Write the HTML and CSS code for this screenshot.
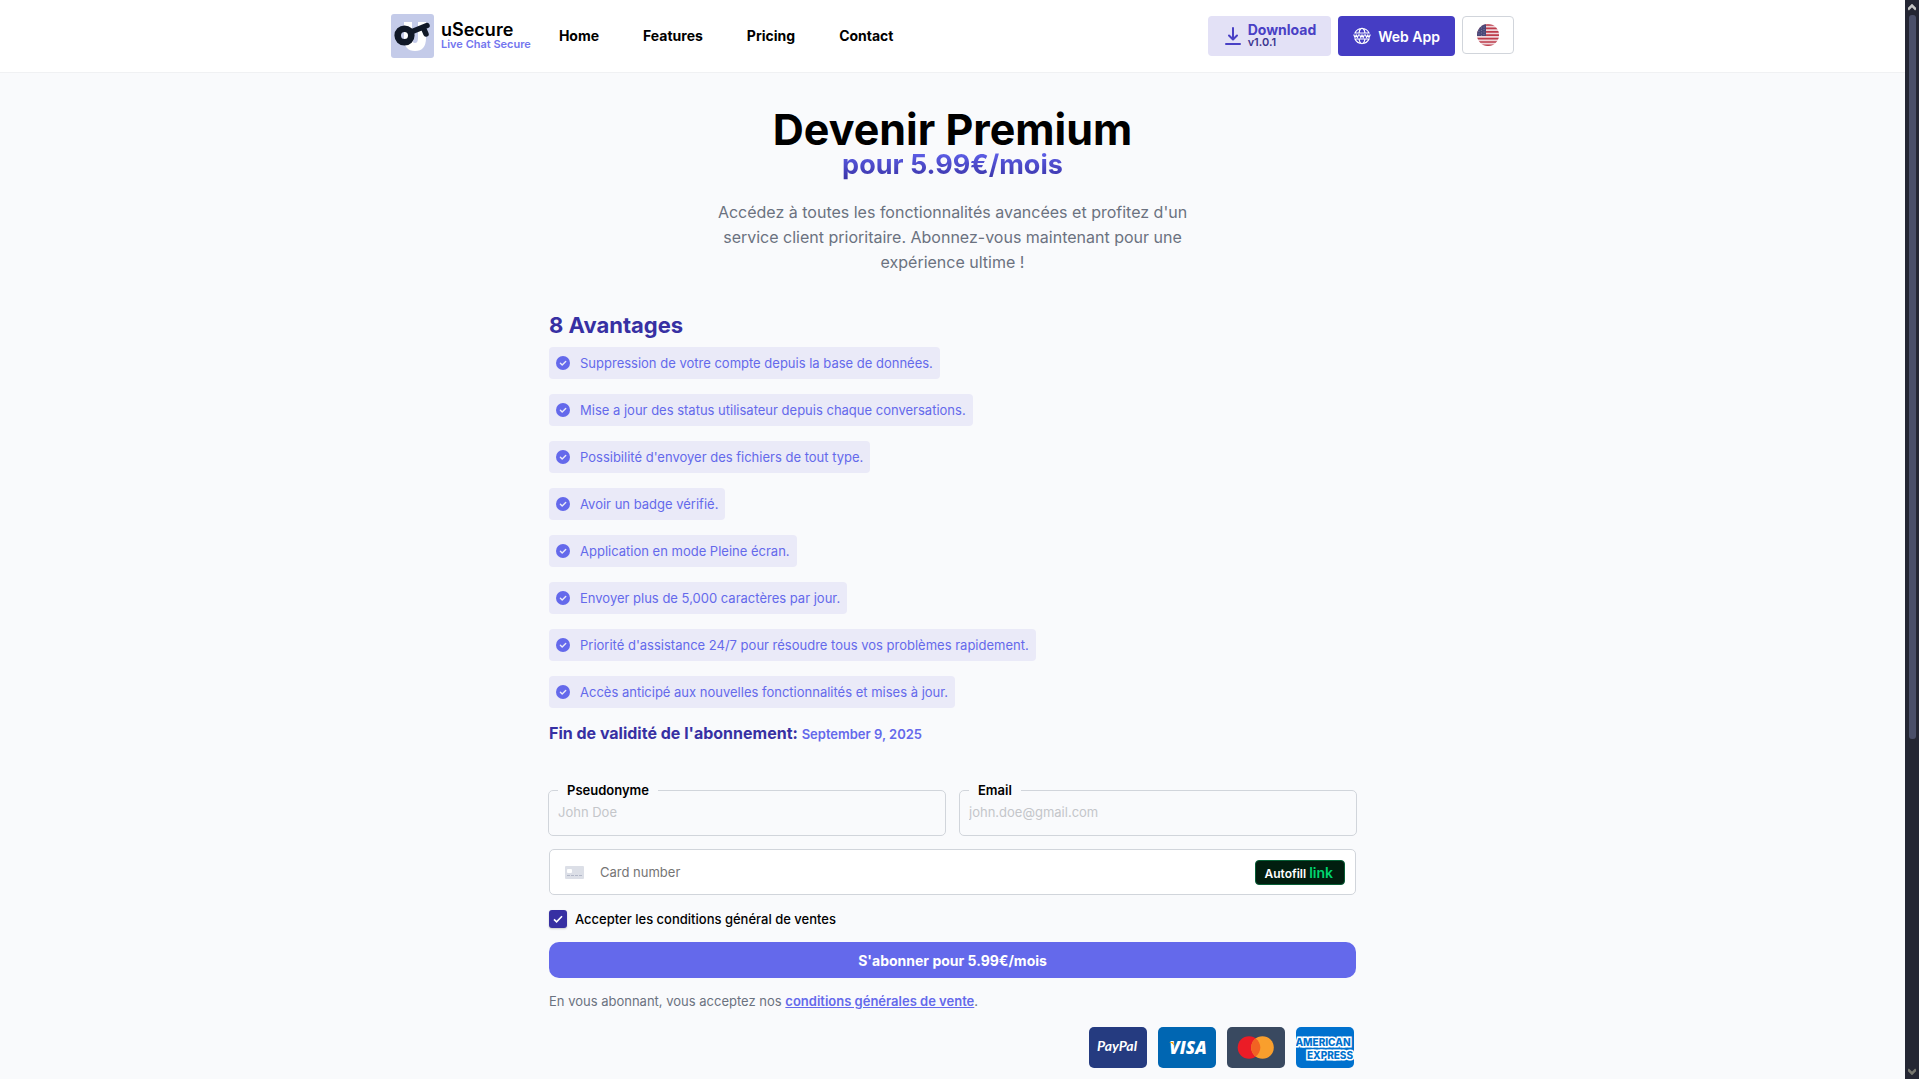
FILE: index.html
```html
<!DOCTYPE html>
<html lang="fr">
	<head>
		<meta charset="UTF-8">
		<meta name="viewport" content="width=device-width, initial-scale=1">
		<title>uSecure - Devenir Premium</title>
		<link rel="stylesheet" href="styles.css">
	</head>
	<body>
		<!-- check icon used by every advantage -->
		<svg class="sprite" aria-hidden="true">
			<symbol id="check" viewBox="0 0 14 14">
				<circle cx="7" cy="7" r="7" fill="#6469eb"/>
				<path d="M4.4 7.2l1.8 1.8 3.5-3.6" fill="none" stroke="#eaeaf8" stroke-width="1.4" stroke-linecap="round" stroke-linejoin="round"/>
			</symbol>
		</svg>

		<div class="page">
			<header class="header">
				<div class="header-in">
					<a class="brand" href="#">
						<svg class="logo" viewBox="0 0 43 44" aria-hidden="true">
							<rect width="43" height="44" rx="3" fill="#c4cbe9"/>
							<path d="M17 8v16q0 9 7 9t7-9V8" fill="none" stroke="#fff" stroke-width="8"/>
							<circle cx="13.5" cy="21.5" r="6.8" fill="none" stroke="#101827" stroke-width="6.6"/>
							<path d="M20 18L36 11.5M32 13l3 7" fill="none" stroke="#101827" stroke-width="5.5" stroke-linecap="round"/>
						</svg>
						<span class="brand-text">
							<span class="brand-name">uSecure</span>
							<span class="brand-sub">Live Chat Secure</span>
						</span>
					</a>
					<nav class="nav">
						<a href="#">Home</a>
						<a href="#">Features</a>
						<a href="#">Pricing</a>
						<a href="#">Contact</a>
					</nav>
					<div class="actions">
						<button class="btn-download" type="button">
							<svg width="16" height="18" viewBox="0 0 16 18" fill="none" stroke="#4940c5" stroke-width="2" stroke-linecap="round" stroke-linejoin="round" aria-hidden="true">
								<path d="M8 1v11M4 8.5l4 4 4-4M1 17h14"/>
							</svg>
							<span class="download-text">
								<span>Download</span>
								<small>v1.0.1</small>
							</span>
						</button>
						<button class="btn-web" type="button">
							<svg width="18" height="18" viewBox="0 0 18 18" fill="none" stroke="#fff" stroke-width="1.2" aria-hidden="true">
								<path d="M2 6a7.7 7.7 0 0 1 14 0zM2 12a7.7 7.7 0 0 0 14 0zM6 6q.8-4.6 3-4.6T12 6M6 12q.8 4.6 3 4.6t3-4.6"/>
								<path d="M.7 7.4l1.3 3 1.2-2.4 1.2 2.4 1.3-3M6.5 7.4l1.3 3L9 8l1.2 2.4 1.3-3M12.3 7.4l1.3 3 1.2-2.4 1.2 2.4 1.3-3"/>
							</svg>
							Web App
						</button>
						<button class="btn-lang" type="button" aria-label="Language">
							<svg width="22" height="22" viewBox="0 0 22 22" aria-hidden="true">
								<clipPath id="round"><circle cx="11" cy="11" r="11"/></clipPath>
								<g clip-path="url(#round)">
									<rect width="22" height="22" fill="#eed5da"/>
									<path d="M0 1h22M0 4.4h22M0 7.8h22M0 11.2h22M0 14.6h22M0 18h22M0 21.4h22" stroke="#bd3d4b" stroke-width="1.7"/>
									<rect width="9" height="12" fill="#494878"/>
									<path d="M2 2v10M4.5 1v11M7 0v12" stroke="#8582a8" stroke-width=".8" stroke-dasharray="1 1.5"/>
								</g>
							</svg>
						</button>
					</div>
				</div>
			</header>

			<main class="main">
				<section class="hero">
					<h1>Devenir Premium</h1>
					<p class="price">pour 5.99€/mois</p>
					<p class="intro">Accédez à toutes les fonctionnalités avancées et profitez d'un service client prioritaire. Abonnez-vous maintenant pour une expérience ultime !</p>
				</section>

				<h2>8 Avantages</h2>
				<ul class="list">
					<li><svg><use href="#check"/></svg>Suppression de votre compte depuis la base de données.</li>
					<li><svg><use href="#check"/></svg>Mise a jour des status utilisateur depuis chaque conversations.</li>
					<li><svg><use href="#check"/></svg>Possibilité d'envoyer des fichiers de tout type.</li>
					<li><svg><use href="#check"/></svg>Avoir un badge vérifié.</li>
					<li><svg><use href="#check"/></svg>Application en mode Pleine écran.</li>
					<li><svg><use href="#check"/></svg>Envoyer plus de 5,000 caractères par jour.</li>
					<li><svg><use href="#check"/></svg>Priorité d'assistance 24/7 pour résoudre tous vos problèmes rapidement.</li>
					<li><svg><use href="#check"/></svg>Accès anticipé aux nouvelles fonctionnalités et mises à jour.</li>
				</ul>
				<p class="validity">Fin de validité de l'abonnement: <span>September 9, 2025</span></p>

				<form class="form">
					<div class="fields">
						<fieldset>
							<legend><label for="pseudo">Pseudonyme</label></legend>
							<input id="pseudo" name="pseudo" type="text" placeholder="John Doe">
						</fieldset>
						<fieldset>
							<legend><label for="email">Email</label></legend>
							<input id="email" name="email" type="email" placeholder="john.doe@gmail.com">
						</fieldset>
					</div>
					<div class="card-field">
						<svg width="19" height="13" viewBox="0 0 19 13" aria-hidden="true">
							<rect width="19" height="13" rx="1" fill="#dcdfe7"/>
							<rect x="2" y="3" width="5" height="4" rx="1" fill="#fff"/>
							<path d="M2 9.5h15" stroke="#b3b8c8" stroke-dasharray="3 1"/>
						</svg>
						<input name="card" type="text" placeholder="Card number" aria-label="Card number">
						<button class="autofill" type="button">Autofill <b>link</b></button>
					</div>
					<div class="terms">
						<input id="terms" name="terms" type="checkbox" checked>
						<label for="terms">Accepter les conditions général de ventes</label>
					</div>
					<button class="subscribe" type="submit">S'abonner pour 5.99€/mois</button>
				</form>
				<p class="notice">En vous abonnant, vous acceptez nos <a href="#">conditions générales de vente</a>.</p>

				<div class="payments">
					<svg viewBox="0 0 58 41" role="img" aria-label="PayPal">
						<rect width="58" height="41" rx="5" fill="#253b80"/>
						<text class="paypal" x="28" y="24" text-anchor="middle">PayPal</text>
					</svg>
					<svg viewBox="0 0 58 41" role="img" aria-label="Visa">
						<rect width="58" height="41" rx="5" fill="#0066b2"/>
						<text class="visa" x="30" y="27" text-anchor="middle">VISA</text>
						<path d="M11 15h4l2 5q-2-4-6-5z" fill="#f7a600"/>
					</svg>
					<svg viewBox="0 0 58 41" role="img" aria-label="Mastercard">
						<rect width="58" height="41" rx="5" fill="#394960"/>
						<circle cx="22" cy="20.5" r="11.3" fill="#eb1c26"/>
						<circle cx="35.5" cy="20.5" r="11.3" fill="#f99f2d"/>
						<path d="M28.7 11.4a11.3 11.3 0 0 1 0 18.2a11.3 11.3 0 0 1 0-18.2z" fill="#f16223"/>
					</svg>
					<svg viewBox="0 0 58 41" role="img" aria-label="American Express">
						<rect width="58" height="41" rx="5" fill="#0071ce"/>
						<text class="amex" x="27" y="19" text-anchor="middle">AMERICAN</text>
						<text class="amex" x="34" y="32" text-anchor="middle">EXPRESS</text>
					</svg>
				</div>
			</main>
		</div>

		<div class="scrollbar" aria-hidden="true">
			<svg width="8" height="7" viewBox="0 0 8 7"><path d="M0 5.5L4 1.5l4 4" fill="none" stroke="#c6c6c6" stroke-width="2.5"/></svg>
			<div class="track"><div class="thumb"></div></div>
			<svg width="8" height="7" viewBox="0 0 8 7"><path d="M0 1.5l4 4 4-4" fill="none" stroke="#77776f" stroke-width="2.5"/></svg>
		</div>
	</body>
</html>
```
FILE: styles.css
```css
* {
	box-sizing: border-box;
}

body {
	margin: 0;
	display: flex;
	height: 100vh;
	overflow: hidden;
	background: #f9fafc;
	color: #000;
	font-family: Inter, "Liberation Sans", sans-serif;
	font-size: 13px;
	line-height: 20px;
}

h1, h2, p, ul {
	margin: 0;
	padding: 0;
}

button, input {
	font-family: inherit;
}

button {
	border: 0;
	padding: 0;
	cursor: pointer;
}

a {
	color: inherit;
	text-decoration: none;
}

.sprite {
	display: none;
}

.page {
	flex: 1;
	overflow: hidden;
}

/* header */
.header {
	background: #fff;
	border-bottom: 1px solid #f0f1f3;
	padding: 0 16px;
}

.header-in {
	display: flex;
	align-items: center;
	max-width: 1123px;
	height: 72px;
	margin: 0 auto;
}

.brand {
	display: flex;
	align-items: center;
	gap: 7px;
}

.logo {
	width: 43px;
	height: 44px;
}

.brand-text {
	display: flex;
	flex-direction: column;
}

.brand-name {
	font-size: 18px;
	font-weight: 600;
	line-height: 16px;
}

.brand-sub {
	font-size: 11px;
	font-weight: 600;
	line-height: 12px;
	color: #7375ee;
}

.nav {
	display: flex;
	gap: 44px;
	margin-left: 28px;
	font-size: 14px;
	font-weight: 700;
}

.actions {
	display: flex;
	align-items: flex-start;
	gap: 7px;
	margin-left: auto;
}

.btn-download, .btn-web {
	display: flex;
	align-items: center;
	height: 40px;
	border-radius: 4px;
}

.btn-download {
	gap: 7px;
	padding: 0 15px 0 17px;
	background: #e3e1f6;
	color: #4940c5;
	font-size: 14px;
	font-weight: 700;
}

.download-text {
	display: flex;
	flex-direction: column;
	align-items: flex-start;
	line-height: 12px;
}

.download-text small {
	font-size: 11px;
	font-weight: 600;
	line-height: 12px;
	color: #3b3590;
}

.btn-web {
	gap: 7px;
	padding: 0 15px;
	background: #453dc4;
	color: #fff;
	font-size: 14px;
	font-weight: 600;
}

.btn-lang {
	display: flex;
	align-items: center;
	justify-content: center;
	width: 52px;
	height: 38px;
	border: 1px solid #d1d5db;
	border-radius: 4px;
	background: #fff;
}

/* content */
.main {
	max-width: 807px;
	margin: 0 auto;
	padding-top: 36px;
}

.hero {
	text-align: center;
}

h1 {
	font-size: 43px;
	font-weight: 700;
	line-height: 40px;
}

.price {
	width: fit-content;
	margin: 0 auto;
	font-size: 27px;
	font-weight: 700;
	line-height: 32px;
	background: linear-gradient(#6366f1, #3730a3);
	background-clip: text;
	color: transparent;
}

.intro {
	max-width: 500px;
	margin: 19px auto 0;
	font-size: 16px;
	line-height: 25px;
	color: #6b7280;
}

h2 {
	margin-top: 36px;
	font-size: 22px;
	font-weight: 700;
	line-height: 28px;
	color: #3730a3;
}

.list {
	display: flex;
	flex-direction: column;
	align-items: flex-start;
	gap: 15px;
	margin-top: 8px;
	list-style: none;
}

.list li {
	display: flex;
	align-items: center;
	gap: 10px;
	height: 32px;
	padding: 0 7px;
	border-radius: 4px;
	background: #eaeaf8;
	color: #6469eb;
}

.list svg {
	width: 14px;
	height: 14px;
}

.validity {
	margin-top: 15px;
	font-size: 16px;
	font-weight: 700;
	color: #3730a3;
}

.validity span {
	font-size: 13px;
	font-weight: 600;
	color: #6469eb;
}

/* form */
.form {
	display: flex;
	flex-direction: column;
	margin-top: 36px;
}

.fields {
	display: grid;
	grid-template-columns: 1fr 1fr;
	gap: 13px;
	margin: 0 -1px;
}

fieldset {
	min-width: 0;
	height: 56px;
	margin: 0;
	padding: 0 9px;
	border: 1px solid #d1d5db;
	border-radius: 5px;
}

legend {
	padding: 0 9px;
	font-size: 13px;
	font-weight: 600;
	line-height: 20px;
}

fieldset input, .card-field input {
	border: 0;
	padding: 0;
	background: none;
	outline: none;
}

fieldset input {
	display: block;
	width: 100%;
	height: 24px;
	font-size: 13px;
}

fieldset input::placeholder {
	color: #c4c6ca;
}

.card-field {
	display: flex;
	align-items: center;
	height: 46px;
	margin-top: 13px;
	padding: 0 10px 0 15px;
	border: 1px solid #d1d5db;
	border-radius: 5px;
	background: #fff;
}

.card-field input {
	flex: 1;
	margin-left: 16px;
	font-size: 13px;
}

.autofill {
	height: 25px;
	padding: 0 11px 0 8px;
	border: 1px solid #065f36;
	border-radius: 4px;
	background: #011e0f;
	color: #fff;
	font-size: 12px;
	font-weight: 600;
}

.autofill b {
	font-size: 14px;
	font-weight: 600;
	color: #00d66f;
}

.terms {
	display: flex;
	align-items: center;
	gap: 8px;
	margin-top: 14px;
	font-weight: 500;
}

.terms input {
	appearance: none;
	width: 18px;
	height: 18px;
	margin: 0;
	border-radius: 3px;
	background: #3730a3 url("data:image/svg+xml,%3Csvg xmlns='http://www.w3.org/2000/svg' viewBox='0 0 18 18'%3E%3Cpath d='M5 9.3l2.6 2.5L13 6.3' fill='none' stroke='white' stroke-width='1.6'/%3E%3C/svg%3E");
	box-shadow: 0 1px 2px rgba(0, 0, 0, .2);
}

.subscribe {
	height: 36px;
	margin-top: 13px;
	border-radius: 10px;
	background: #6469eb;
	color: #fff;
	font-size: 14px;
	font-weight: 700;
}

.notice {
	margin-top: 13px;
	color: #6b7280;
}

.notice a {
	font-weight: 600;
	color: #6469eb;
	text-decoration: underline;
}

.payments {
	display: flex;
	justify-content: flex-end;
	gap: 11px;
	margin-top: 16px;
	padding: 0 2px 11px 0;
}

.payments svg {
	width: 58px;
	height: 41px;
}

.paypal {
	font: italic 700 14px Lato, sans-serif;
	fill: #fff;
}

.visa {
	font: italic 900 17px "Open Sans", sans-serif;
	fill: #fff;
}

.amex {
	font: 800 10px Inter, sans-serif;
	fill: #0071ce;
	stroke: #fff;
	stroke-width: 3px;
	paint-order: stroke;
}

/* scrollbar */
.scrollbar {
	display: flex;
	flex-direction: column;
	align-items: center;
	justify-content: space-between;
	width: 14px;
	padding: 4px 0;
	background: #242633;
}

.track {
	flex: 1;
	width: 7px;
	padding: 4px 0;
}

.thumb {
	height: 69%;
	border-radius: 3px;
	background: #4a4f69;
}
```
